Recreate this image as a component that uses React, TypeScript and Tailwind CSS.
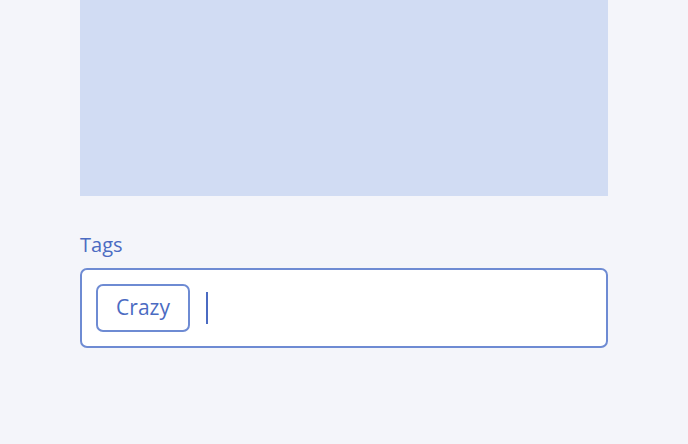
import React from "react";

export default function App() {
  return (
    <div className="min-h-screen w-full bg-[#f4f5fa]" style={{ fontFamily: '"Open Sans", "Noto Sans", sans-serif' }}>
      <div className="ml-[80px] flex w-[528px] flex-col">
        <div className="h-[196px] w-full bg-[#d1dcf3]" />
        <label className="mt-[37px] text-[20px] leading-[24px] text-[#4b6bc2]">Tags</label>
        <div className="mt-[11px] flex h-[80px] w-full items-center rounded-[7px] border-2 border-[#6e8bd3] bg-white px-[14px]">
          <div className="flex h-[48px] w-[94px] items-center justify-center rounded-[7px] border-2 border-[#6e8bd3] text-[21px] text-[#4b6bc2]">
            Crazy
          </div>
          <div className="ml-[16px] h-[32px] w-[2px] bg-[#4b6bc2]" />
        </div>
      </div>
    </div>
  );
}
